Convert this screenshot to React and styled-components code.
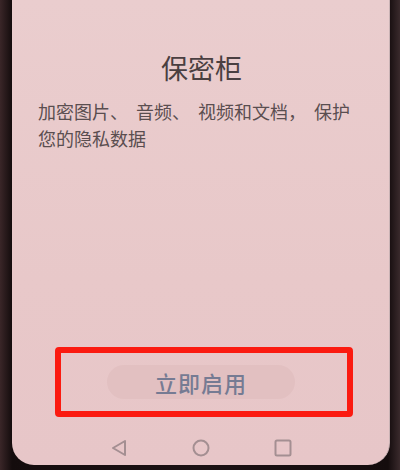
import styled, { createGlobalStyle } from 'styled-components';

const GlobalStyle = createGlobalStyle`
  html, body {
    margin: 0;
    padding: 0;
    background: #1e1315;
  }
  body {
    width: 400px;
    height: 470px;
    overflow: hidden;
    font-family: "Noto Sans CJK SC", "Noto Sans", sans-serif;
  }
`;

const Phone = styled.div`
  display: flex;
  height: 470px;
  box-sizing: border-box;
  padding: 0 10px 5px 12px;
  background: linear-gradient(90deg, #3a2628 0%, #140c0d 3%, #1c1214 50%, #140c0d 97%, #3a2a2c 100%);
`;

const Screen = styled.div`
  flex: 1;
  display: flex;
  flex-direction: column;
  background: linear-gradient(180deg, #eacdce 0%, #e8c8c9 60%, #e7c6c8 100%);
  border-radius: 0 0 22px 22px;
  border-right: 1px solid #c9b3b5;
  overflow: hidden;
`;

const Title = styled.h1`
  margin: 50px 0 0;
  text-align: center;
  font-size: 27px;
  line-height: 36px;
  font-weight: 400;
  color: #4a3f41;
  padding-left: 2px;
`;

const Description = styled.p`
  margin: 12px 0 0;
  padding: 0 26px;
  font-size: 18px;
  line-height: 27px;
  word-spacing: 4px;
  color: #5a4e50;
`;

const Spacer = styled.div`
  flex: 1;
`;

const Highlight = styled.div`
  display: flex;
  align-items: center;
  justify-content: center;
  width: 298px;
  height: 70px;
  box-sizing: border-box;
  margin-left: 43px;
  border: 6px solid #fb1a10;
  border-radius: 4px;
`;

const StartButton = styled.button`
  display: flex;
  align-items: center;
  justify-content: center;
  width: 188px;
  height: 34px;
  margin-left: -6px;
  border: none;
  border-radius: 17px;
  background: #e2c0c1;
  color: #767b93;
  font-family: inherit;
  font-size: 22px;
  font-weight: 500;
  letter-spacing: 1px;
  padding: 0;
`;

const NavBar = styled.div`
  display: flex;
  justify-content: center;
  align-items: flex-end;
  gap: 64px;
  height: 48px;
  box-sizing: border-box;
  padding-bottom: 8px;
`;

const NavIcon = styled.svg`
  width: 18px;
  height: 18px;
  display: block;
`;

const stroke = { fill: 'none', stroke: '#a48f92', strokeWidth: 2, strokeLinejoin: 'round' };

export default function App() {
  return (
    <>
      <GlobalStyle />
      <Phone>
        <Screen>
          <Title>保密柜</Title>
          <Description>加密图片、 音频、 视频和文档， 保护您的隐私数据</Description>
          <Spacer />
          <Highlight>
            <StartButton>立即启用</StartButton>
          </Highlight>
          <NavBar>
            <NavIcon viewBox="0 0 18 18">
              <path d="M15 2 L3 9 L15 16 Z" {...stroke} />
            </NavIcon>
            <NavIcon viewBox="0 0 18 18">
              <circle cx="9" cy="9" r="7.5" {...stroke} />
            </NavIcon>
            <NavIcon viewBox="0 0 18 18">
              <rect x="1.5" y="1.5" width="15" height="15" rx="1.5" {...stroke} />
            </NavIcon>
          </NavBar>
        </Screen>
      </Phone>
    </>
  );
}
